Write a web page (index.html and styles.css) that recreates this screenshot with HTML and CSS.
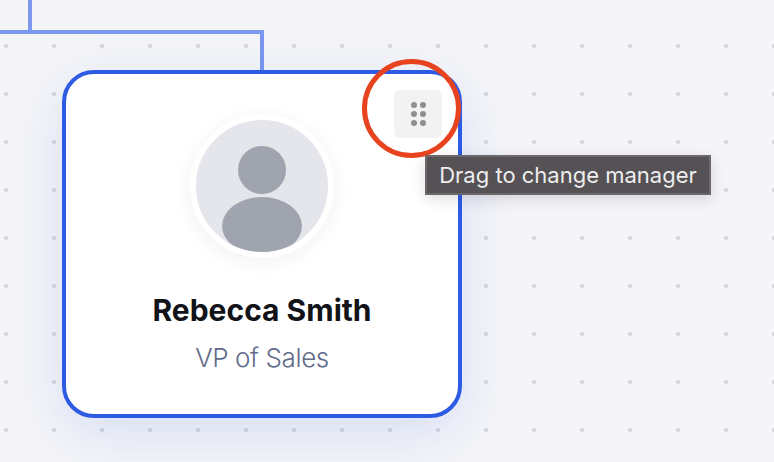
FILE: index.html
```html
<!DOCTYPE html>
<html lang="en">
<head>
    <meta charset="UTF-8">
    <title>Org chart</title>
    <link rel="stylesheet" href="styles.css">
</head>
<body>
    <div class="canvas">
        <div class="line line-top"></div>
        <div class="line line-across"></div>
        <div class="line line-down"></div>

        <div class="card">
            <div class="avatar">
                <svg class="avatar-icon" width="132" height="132" viewBox="0 0 132 132">
                    <circle cx="66" cy="50" r="24" fill="#a0a4af"/>
                    <ellipse cx="66" cy="106" rx="40" ry="29" fill="#a0a4af"/>
                </svg>
            </div>
            <div class="name">Rebecca Smith</div>
            <div class="role">VP of Sales</div>
            <div class="handle">
                <span class="dot"></span><span class="dot"></span>
                <span class="dot"></span><span class="dot"></span>
                <span class="dot"></span><span class="dot"></span>
            </div>
        </div>

        <div class="highlight"></div>
        <div class="tooltip">Drag to change manager</div>
    </div>
</body>
</html>
```
FILE: styles.css
```css
html, body {
    margin: 0;
    padding: 0;
}
.canvas {
    position: relative;
    width: 774px;
    height: 462px;
    overflow: hidden;
    background-color: #f5f5f8;
    background-image: radial-gradient(circle at 24px 24px, #d4d6de 0, #d4d6de 1.8px, transparent 2.4px);
    background-size: 48px 48px;
    background-position: -18px 22px;
    font-family: Inter, "Liberation Sans", sans-serif;
}
.line {
    position: absolute;
    background: #7b97ee;
}
.line-top {
    left: 28px;
    top: 0;
    width: 4px;
    height: 30px;
}
.line-across {
    left: 0;
    top: 30px;
    width: 264px;
    height: 4px;
}
.line-down {
    left: 260px;
    top: 34px;
    width: 4px;
    height: 36px;
}
.card {
    position: absolute;
    left: 62px;
    top: 70px;
    width: 400px;
    height: 348px;
    box-sizing: border-box;
    padding-top: 40px;
    display: flex;
    flex-direction: column;
    align-items: center;
    background: white;
    border: 4px solid #2d5be3;
    border-radius: 32px;
    box-shadow: 0 16px 56px rgba(45, 91, 227, 0.14);
}
.avatar {
    width: 132px;
    height: 132px;
    border: 6px solid white;
    border-radius: 50%;
    overflow: hidden;
    background: #e5e6eb;
    box-shadow: 0 4px 20px rgba(20, 30, 60, 0.06);
}
.avatar-icon {
    display: block;
}
.name {
    margin-top: 32px;
    font-size: 30px;
    line-height: 40px;
    font-weight: 700;
    color: #111318;
}
.role {
    margin-top: 12px;
    font-size: 26px;
    line-height: 32px;
    font-weight: 300;
    letter-spacing: -0.4px;
    color: #5f6b8a;
}
.handle {
    position: absolute;
    left: 328px;
    top: 16px;
    width: 48px;
    height: 48px;
    box-sizing: border-box;
    padding: 12px 15px 12px 17px;
    display: grid;
    grid-template-columns: 6px 6px;
    grid-auto-rows: 6px;
    gap: 3px;
    background: #f2f2f3;
    border-radius: 6px;
}
.dot {
    background: #8f8f8f;
    border-radius: 50%;
}
.highlight {
    position: absolute;
    left: 362px;
    top: 59px;
    width: 99px;
    height: 99px;
    box-sizing: border-box;
    border: 5px solid #e8431f;
    border-radius: 50%;
}
.tooltip {
    position: absolute;
    left: 425px;
    top: 155px;
    width: 286px;
    height: 40px;
    box-sizing: border-box;
    border: 2px solid #6b686c;
    background: #555155;
    color: #eeeeee;
    font-size: 22px;
    line-height: 36px;
    text-align: center;
    white-space: nowrap;
    box-shadow: 0 4px 14px rgba(30, 30, 50, 0.15);
}
```
